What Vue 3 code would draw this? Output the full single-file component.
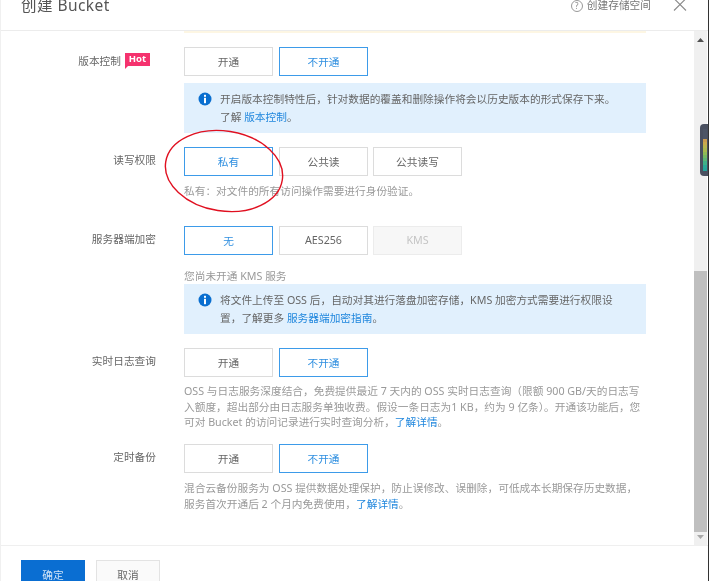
<script setup>
const stripes = ['#4d5566','#4d5566','#4d5566','#c99a4e','#c9a94e','#b9b44e','#a8b84e','#8fba56','#74b862','#5ab574','#3fb088','#2aa898','#22a69c'];
</script>

<template>
  <div class="dialog">
    <header class="head">
      <h1 class="title">创建 Bucket</h1>
      <div class="head-right">
        <span class="help">?</span>
        <span class="help-text">创建存储空间</span>
        <svg class="close" viewBox="0 0 14 14" width="14" height="14">
          <path d="M1 0.5 L13 12.5 M13 0.5 L1 12.5" stroke="#8a8a8a" stroke-width="1.1" fill="none" />
        </svg>
      </div>
    </header>

    <div class="middle">
      <div class="content">
        <div class="strip"></div>

        <div class="row r1">
          <div class="label label-hot">版本控制<span class="hot">Hot</span></div>
          <div class="field">
            <div class="btns">
              <button class="btn">开通</button>
              <button class="btn on">不开通</button>
            </div>
            <div class="info">
              <svg class="i" viewBox="0 0 14 14" width="14" height="14">
                <circle cx="7" cy="7" r="6.5" fill="#0a6fd0" />
                <rect x="6" y="2.8" width="2" height="2" fill="#fff" />
                <rect x="6" y="5.8" width="2" height="5.4" fill="#fff" />
              </svg>
              <p>开启版本控制特性后，针对数据的覆盖和删除操作将会以历史版本的形式保存下来。<br />了解 <a>版本控制</a>。</p>
            </div>
          </div>
        </div>

        <div class="row r2">
          <div class="label">读写权限</div>
          <div class="field">
            <div class="btns">
              <button class="btn on">私有</button>
              <button class="btn">公共读</button>
              <button class="btn">公共读写</button>
            </div>
            <p class="note n-private">私有：对文件的所有访问操作需要进行身份验证。</p>
          </div>
        </div>

        <div class="row r3">
          <div class="label">服务器端加密</div>
          <div class="field">
            <div class="btns">
              <button class="btn on">无</button>
              <button class="btn">AES256</button>
              <button class="btn off">KMS</button>
            </div>
            <p class="note n-kms">您尚未开通 KMS 服务</p>
            <div class="info info2">
              <svg class="i" viewBox="0 0 14 14" width="14" height="14">
                <circle cx="7" cy="7" r="6.5" fill="#0a6fd0" />
                <rect x="6" y="2.8" width="2" height="2" fill="#fff" />
                <rect x="6" y="5.8" width="2" height="5.4" fill="#fff" />
              </svg>
              <p>将文件上传至 OSS 后，自动对其进行落盘加密存储，KMS 加密方式需要进行权限设<br />置，了解更多 <a>服务器端加密指南</a>。</p>
            </div>
          </div>
        </div>

        <div class="row r4">
          <div class="label">实时日志查询</div>
          <div class="field">
            <div class="btns">
              <button class="btn">开通</button>
              <button class="btn on">不开通</button>
            </div>
            <p class="note n-log">OSS 与日志服务深度结合，免费提供最近 7 天内的 OSS 实时日志查询（限额 900 GB/天的日志写<br />入额度，超出部分由日志服务单独收费。假设一条日志为1 KB，约为 9 亿条）。开通该功能后，您<br />可对 Bucket 的访问记录进行实时查询分析，<a>了解详情</a>。</p>
          </div>
        </div>

        <div class="row r5">
          <div class="label">定时备份</div>
          <div class="field">
            <div class="btns">
              <button class="btn">开通</button>
              <button class="btn on">不开通</button>
            </div>
            <p class="note n-backup">混合云备份服务为 OSS 提供数据处理保护，防止误修改、误删除，可低成本长期保存历史数据，<br />服务首次开通后 2 个月内免费使用，<a>了解详情</a>。</p>
          </div>
        </div>

        <svg class="circle" viewBox="0 0 124 92" width="124" height="92">
          <ellipse cx="62" cy="46" rx="59" ry="40" transform="rotate(9 62 46)" fill="none" stroke="#e01020" stroke-width="1.4" />
        </svg>
      </div>

      <div class="scrollbar">
        <svg class="arrow" viewBox="0 0 7 4" width="7" height="4"><path d="M3.5 0 L7 4 L0 4 Z" fill="#505050" /></svg>
        <div class="track"><div class="thumb"></div></div>
        <svg class="arrow" viewBox="0 0 7 4" width="7" height="4"><path d="M0 0 L7 0 L3.5 4 Z" fill="#a8a8a8" /></svg>
      </div>

      <div class="meter">
        <i v-for="(c, n) in stripes" :key="n" :style="{ background: c }"></i>
      </div>
    </div>

    <footer class="foot">
      <button class="act primary">确定</button>
      <button class="act">取消</button>
    </footer>
  </div>
</template>

<style>
html, body { margin: 0; background: #fff; overflow: hidden; }
</style>

<style scoped>
.dialog {
  width: 709px;
  height: 581px;
  box-sizing: border-box;
  border-left: 1px solid #f0f0f0;
  border-right: 1px solid #333;
  background: #fff;
  display: flex;
  flex-direction: column;
  overflow: hidden;
  font-family: "Noto Sans", "Noto Sans CJK SC", sans-serif;
  font-size: 10.7px;
  color: #666;
  filter: blur(0.45px);
}
.head {
  height: 31px;
  flex: none;
  box-sizing: border-box;
  border-bottom: 1px solid #ececec;
  display: flex;
  justify-content: space-between;
  padding: 0 21px 0 20px;
}
.title {
  margin: -4px 0 0;
  font-size: 15.5px;
  line-height: 18px;
  font-weight: 400;
  color: #555;
  letter-spacing: 0.45px;
}
.head-right {
  display: flex;
  align-items: flex-start;
  height: 12px;
  color: #777;
}
.help {
  width: 10px;
  height: 10px;
  border: 1px solid #999;
  border-radius: 50%;
  font-size: 8px;
  line-height: 10px;
  text-align: center;
  color: #888;
}
.help-text { margin-left: 4px; font-size: 10.7px; line-height: 11px; }
.close { margin-left: 22px; margin-top: -2px; }
.middle { flex: 1; display: flex; position: relative; min-height: 0; }
.content { flex: 1; min-width: 0; position: relative; overflow: hidden; }
.strip {
  height: 2px;
  margin: 0 48px 0 183px;
  background: #fdf6e3;
}
.row { display: flex; }
.label {
  width: 155px;
  flex: none;
  box-sizing: border-box;
  text-align: right;
  line-height: 27px;
  position: relative;
}
.label-hot { padding-right: 35px; line-height: 28px; }
.hot {
  position: absolute;
  left: 124px;
  top: 6px;
  width: 25px;
  height: 13px;
  background: #f5326e;
  color: #fff;
  font-size: 9.5px;
  font-weight: 700;
  line-height: 12px;
  text-align: center;
}
.hot::after {
  content: "";
  position: absolute;
  left: 0;
  bottom: -3px;
  border-top: 3px solid #f5326e;
  border-right: 3px solid transparent;
}
.field { margin-left: 28px; width: 462px; }
.btns { display: flex; gap: 6px; }
.btn {
  width: 89px;
  height: 29px;
  box-sizing: border-box;
  padding: 0 0 1px;
  border: 1px solid #dcdcdc;
  background: #fff;
  font: inherit;
  color: #666;
}
.btn + .btn + .btn { margin-left: -1px; }
.btn.on { border-color: #3d9be9; color: #2f8fe0; }
.btn.off { background: #f7f7f7; border-color: #ececec; color: #c4c4c4; }
.info {
  margin-top: 7px;
  height: 50px;
  box-sizing: border-box;
  background: #e1f0fd;
  padding: 8px 0 0 14px;
  display: flex;
}
.info2 { margin-top: 0; }
.i { flex: none; margin: 1px 0 0 0; }
.info p { margin: 0 0 0 8px; line-height: 17.5px; color: #666; white-space: nowrap; }
a { color: #1f86dd; }
.note { margin: 0; color: #999; white-space: nowrap; }
.n-private { margin-top: 7px; line-height: 16px; }
.n-kms { margin-top: 14px; line-height: 15px; height: 15px; }
.n-log { margin-top: 7px; line-height: 15.5px; }
.n-backup { margin-top: 6.5px; line-height: 16px; }
.r1 { margin-top: 14px; }
.r2 { margin-top: 14px; }
.r3 { margin-top: 27px; }
.r4 { margin-top: 14px; }
.r5 { margin-top: 13.5px; }
.circle {
  position: absolute;
  left: 161px;
  top: 94px;
}
.scrollbar {
  width: 13px;
  flex: none;
  background: #f0f0f0;
  display: flex;
  flex-direction: column;
  align-items: center;
  margin-right: 1px;
  padding: 7px 0 6px;
  box-sizing: border-box;
}
.track {
  flex: 1;
  width: 13px;
  margin: 0 0 3px;
  display: flex;
  flex-direction: column;
  justify-content: flex-end;
}
.thumb { height: 261px; background: #bfbfbf; }
.meter {
  position: absolute;
  right: -1px;
  top: 93px;
  width: 9px;
  height: 52px;
  box-sizing: border-box;
  padding: 5px 0 5px 3px;
  background: #4a5060;
  border-radius: 4px 0 0 4px;
  display: flex;
  flex-direction: column;
}
.meter i { flex: 1; display: block; width: 4px; }
.foot {
  height: 36px;
  flex: none;
  box-sizing: border-box;
  border-top: 1px solid #efefef;
  padding: 14px 0 0 20px;
  display: flex;
  gap: 11px;
}
.act {
  width: 64px;
  height: 30px;
  box-sizing: border-box;
  border: 1px solid #e3e3e3;
  background: #fafafa;
  padding: 0 0 2px;
  font: inherit;
  color: #666;
}
.act.primary { background: #0a6ed2; border-color: #0a6ed2; color: #cfe3f7; }
</style>
